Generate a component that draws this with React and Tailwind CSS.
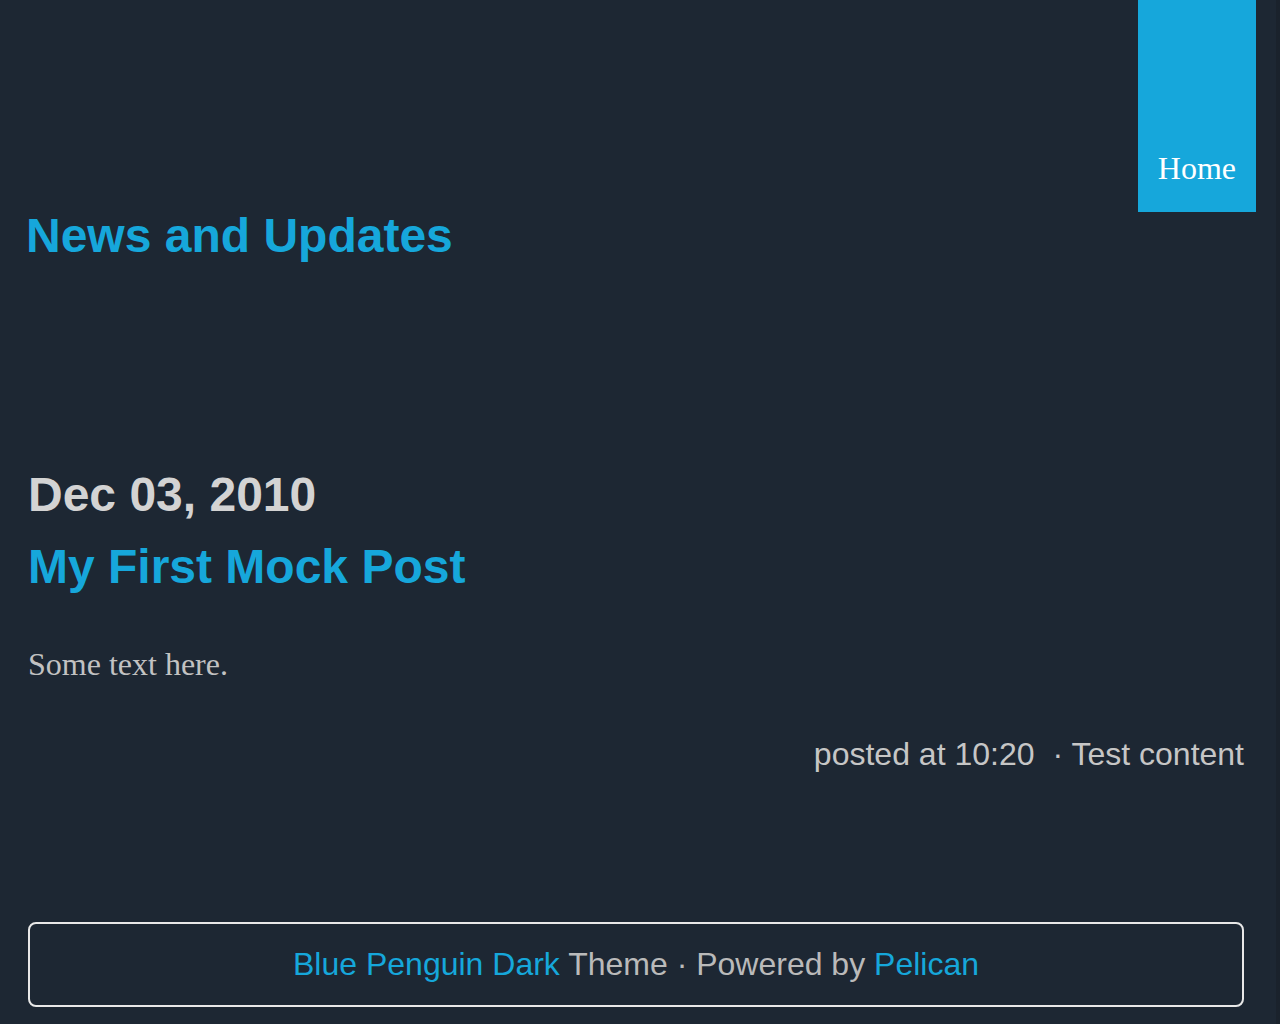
import React from 'react';

const sans = "font-['Liberation_Sans',Arial,sans-serif]";
const serif = "font-['Liberation_Serif','Times_New_Roman',serif]";

const Header = () => (
    <header>
        {/* nav: single tab hanging from the top */}
        <nav className="flex justify-end pr-[20px]">
            <a href="#" className={`${serif} h-[212px] flex items-end px-[20px] pb-[24px] bg-[#16a7db] text-white text-[32px] leading-[40px]`}>
                Home
            </a>
        </nav>
        <h1 className={`${sans} pl-[26px] text-[48px] leading-[48px] font-bold text-[#16a7db]`}>
            <a href="#">News and Updates</a>
        </h1>
    </header>
);

const Post = () => (
    <article className="mt-[211px] pl-[28px] pr-[32px]">
        <h2 className={`${sans} text-[48px] leading-[48px] font-bold text-[#d3d3d3]`}>Dec 03, 2010</h2>
        <h3 className={`${sans} mt-[24px] text-[48px] leading-[48px] font-bold text-[#16a7db]`}>
            <a href="#">My First Mock Post</a>
        </h3>
        <p className={`${serif} mt-[53px] text-[32px] leading-[40px] text-[#c2c2c2]`}>Some text here.</p>
        <div className={`${sans} mt-[50px] text-right text-[32px] leading-[40px] text-[#c6c6c6]`}>
            posted at 10:20
            <span className="ml-[18px]">· Test content</span>
        </div>
    </article>
);

const Footer = () => (
    <footer className="mt-[148px] pl-[28px] pr-[32px] pb-[19px]">
        <div className={`${sans} border-2 border-[#e8e8e8] rounded-[8px] pt-[20px] pb-[21px] text-center text-[32px] leading-[40px] text-[#bababa]`}>
            <a href="#" className="text-[#16a7db]">Blue Penguin Dark</a> Theme · Powered by{' '}
            <a href="#" className="text-[#16a7db]">Pelican</a>
        </div>
    </footer>
);

export default function App() {
    return (
        <div className="flex min-h-screen bg-[#1d2733]">
            <div className="w-[1276px]">
                <Header />
                <Post />
                <Footer />
            </div>
            <div className="w-[4px] bg-[#1a222c]" />
        </div>
    );
}
